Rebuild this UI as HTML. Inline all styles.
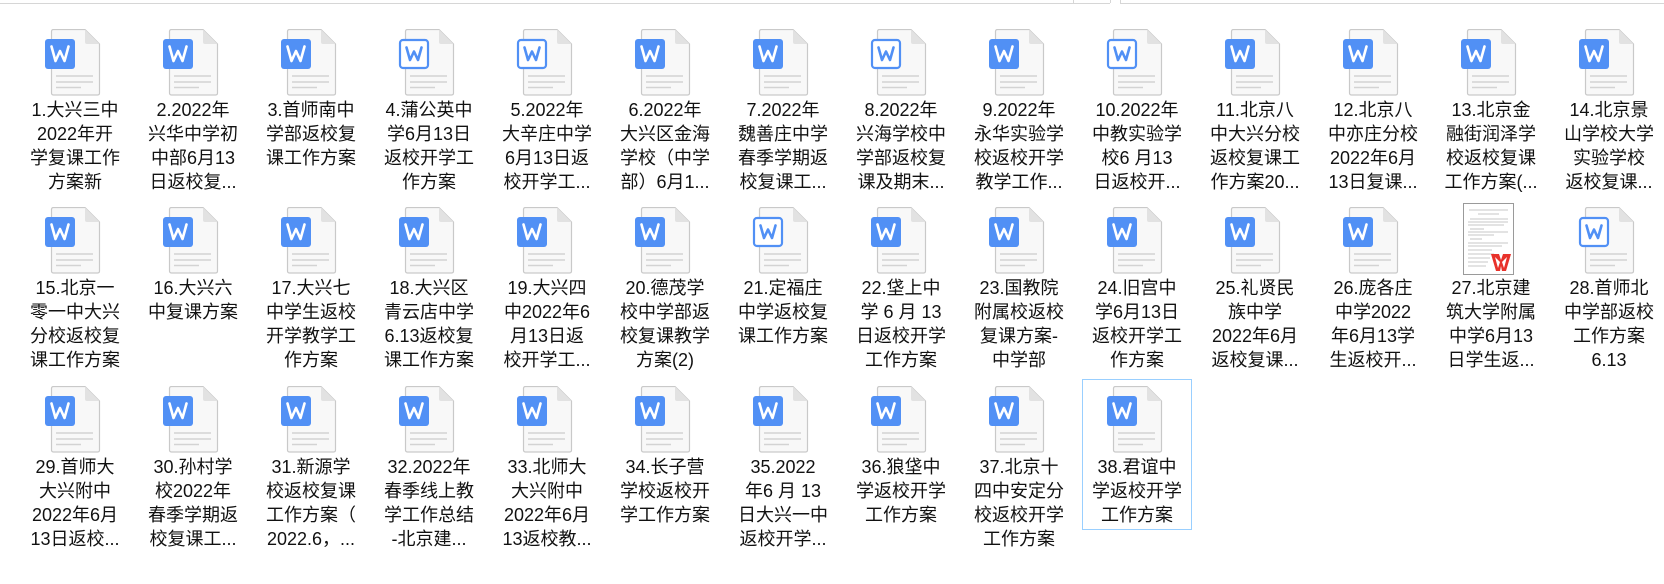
<!DOCTYPE html>
<html><head><meta charset="utf-8">
<style>
html,body{margin:0;padding:0;background:#fff;}
body{width:1664px;height:584px;position:relative;overflow:hidden;font-family:"Liberation Sans","Noto Sans CJK SC",sans-serif;}
.c{position:absolute;width:110px;height:178px;}
.c svg.i{position:absolute;left:23px;top:29px;width:60px;height:68px;}
.t{position:absolute;left:-4px;top:98px;width:118px;text-align:center;font-size:18px;line-height:24px;color:#111;white-space:nowrap;}
.sel{position:absolute;left:0;top:22px;width:108px;height:149px;border:1px solid #99cfff;}
.th{position:absolute;left:27px;top:25px;width:49px;height:70px;border:1px solid #9a9a9a;background:#fff;}
.tl{position:absolute;left:0;top:3px;height:0;border-top:1px solid #d6d6d6;}
</style></head><body>
<svg width="0" height="0" style="position:absolute">
<defs>
<symbol id="pg" viewBox="0 0 60 68">
<path d="M8.5 2.5 Q8.5 0.5 10.5 0.5 L42 0.5 L56.5 15 L56.5 64 Q56.5 66 54.5 66 L10.5 66 Q8.5 66 8.5 64 Z" fill="#f8f8f8" stroke="#c9c9c9" stroke-width="1.2"/>
<path d="M42 0.5 L42 13 Q42 15 44 15 L56.5 15 Z" fill="#e2e2e2"/>
<line x1="13" y1="47" x2="50" y2="47" stroke="#d3d3d3" stroke-width="1.6"/>
<line x1="13" y1="53" x2="50" y2="53" stroke="#d3d3d3" stroke-width="1.6"/>
<line x1="13" y1="58.5" x2="38" y2="58.5" stroke="#d3d3d3" stroke-width="1.6"/>
</symbol>
</defs></svg>
<div class="tl" style="left:0;width:1073px"></div>
<div style="position:absolute;left:1073px;top:0;height:3px;border-left:1px solid #d6d6d6"></div>
<div class="tl" style="left:1073px;width:37px"></div>
<div style="position:absolute;left:1110px;top:0;height:3px;border-left:1px solid #d6d6d6"></div>
<div style="position:absolute;left:1120px;top:0;height:3px;border-left:1px solid #d6d6d6"></div>
<div class="tl" style="left:1120px;width:544px"></div>

<!-- filled icon template: -->
<!-- row 1 -->
<div class="c" style="left:20px;top:0"><svg class="i" viewBox="0 0 60 68"><use href="#pg"/><rect x="2" y="10" width="30" height="30" rx="3" fill="#5190f5"/><polyline points="8.5,17.5 12.5,32 17,22 21.5,32 25.5,17.5" fill="none" stroke="#fff" stroke-width="2.6" stroke-linejoin="round" stroke-linecap="round"/></svg><div class="t">1.大兴三中<br>2022年开<br>学复课工作<br>方案新</div></div>
<div class="c" style="left:138px;top:0"><svg class="i" viewBox="0 0 60 68"><use href="#pg"/><rect x="2" y="10" width="30" height="30" rx="3" fill="#5190f5"/><polyline points="8.5,17.5 12.5,32 17,22 21.5,32 25.5,17.5" fill="none" stroke="#fff" stroke-width="2.6" stroke-linejoin="round" stroke-linecap="round"/></svg><div class="t">2.2022年<br>兴华中学初<br>中部6月13<br>日返校复...</div></div>
<div class="c" style="left:256px;top:0"><svg class="i" viewBox="0 0 60 68"><use href="#pg"/><rect x="2" y="10" width="30" height="30" rx="3" fill="#5190f5"/><polyline points="8.5,17.5 12.5,32 17,22 21.5,32 25.5,17.5" fill="none" stroke="#fff" stroke-width="2.6" stroke-linejoin="round" stroke-linecap="round"/></svg><div class="t">3.首师南中<br>学部返校复<br>课工作方案</div></div>
<div class="c" style="left:374px;top:0"><svg class="i" viewBox="0 0 60 68"><use href="#pg"/><rect x="3" y="11" width="28" height="28" rx="3" fill="#fff" stroke="#5190f5" stroke-width="2.2"/><polyline points="9.5,18.5 13,31 17,22.5 21,31 24.5,18.5" fill="none" stroke="#5190f5" stroke-width="2.6" stroke-linejoin="round" stroke-linecap="round"/></svg><div class="t">4.蒲公英中<br>学6月13日<br>返校开学工<br>作方案</div></div>
<div class="c" style="left:492px;top:0"><svg class="i" viewBox="0 0 60 68"><use href="#pg"/><rect x="3" y="11" width="28" height="28" rx="3" fill="#fff" stroke="#5190f5" stroke-width="2.2"/><polyline points="9.5,18.5 13,31 17,22.5 21,31 24.5,18.5" fill="none" stroke="#5190f5" stroke-width="2.6" stroke-linejoin="round" stroke-linecap="round"/></svg><div class="t">5.2022年<br>大辛庄中学<br>6月13日返<br>校开学工...</div></div>
<div class="c" style="left:610px;top:0"><svg class="i" viewBox="0 0 60 68"><use href="#pg"/><rect x="2" y="10" width="30" height="30" rx="3" fill="#5190f5"/><polyline points="8.5,17.5 12.5,32 17,22 21.5,32 25.5,17.5" fill="none" stroke="#fff" stroke-width="2.6" stroke-linejoin="round" stroke-linecap="round"/></svg><div class="t">6.2022年<br>大兴区金海<br>学校（中学<br>部）6月1...</div></div>
<div class="c" style="left:728px;top:0"><svg class="i" viewBox="0 0 60 68"><use href="#pg"/><rect x="2" y="10" width="30" height="30" rx="3" fill="#5190f5"/><polyline points="8.5,17.5 12.5,32 17,22 21.5,32 25.5,17.5" fill="none" stroke="#fff" stroke-width="2.6" stroke-linejoin="round" stroke-linecap="round"/></svg><div class="t">7.2022年<br>魏善庄中学<br>春季学期返<br>校复课工...</div></div>
<div class="c" style="left:846px;top:0"><svg class="i" viewBox="0 0 60 68"><use href="#pg"/><rect x="3" y="11" width="28" height="28" rx="3" fill="#fff" stroke="#5190f5" stroke-width="2.2"/><polyline points="9.5,18.5 13,31 17,22.5 21,31 24.5,18.5" fill="none" stroke="#5190f5" stroke-width="2.6" stroke-linejoin="round" stroke-linecap="round"/></svg><div class="t">8.2022年<br>兴海学校中<br>学部返校复<br>课及期末...</div></div>
<div class="c" style="left:964px;top:0"><svg class="i" viewBox="0 0 60 68"><use href="#pg"/><rect x="2" y="10" width="30" height="30" rx="3" fill="#5190f5"/><polyline points="8.5,17.5 12.5,32 17,22 21.5,32 25.5,17.5" fill="none" stroke="#fff" stroke-width="2.6" stroke-linejoin="round" stroke-linecap="round"/></svg><div class="t">9.2022年<br>永华实验学<br>校返校开学<br>教学工作...</div></div>
<div class="c" style="left:1082px;top:0"><svg class="i" viewBox="0 0 60 68"><use href="#pg"/><rect x="3" y="11" width="28" height="28" rx="3" fill="#fff" stroke="#5190f5" stroke-width="2.2"/><polyline points="9.5,18.5 13,31 17,22.5 21,31 24.5,18.5" fill="none" stroke="#5190f5" stroke-width="2.6" stroke-linejoin="round" stroke-linecap="round"/></svg><div class="t">10.2022年<br>中教实验学<br>校6 月13<br>日返校开...</div></div>
<div class="c" style="left:1200px;top:0"><svg class="i" viewBox="0 0 60 68"><use href="#pg"/><rect x="2" y="10" width="30" height="30" rx="3" fill="#5190f5"/><polyline points="8.5,17.5 12.5,32 17,22 21.5,32 25.5,17.5" fill="none" stroke="#fff" stroke-width="2.6" stroke-linejoin="round" stroke-linecap="round"/></svg><div class="t">11.北京八<br>中大兴分校<br>返校复课工<br>作方案20...</div></div>
<div class="c" style="left:1318px;top:0"><svg class="i" viewBox="0 0 60 68"><use href="#pg"/><rect x="2" y="10" width="30" height="30" rx="3" fill="#5190f5"/><polyline points="8.5,17.5 12.5,32 17,22 21.5,32 25.5,17.5" fill="none" stroke="#fff" stroke-width="2.6" stroke-linejoin="round" stroke-linecap="round"/></svg><div class="t">12.北京八<br>中亦庄分校<br>2022年6月<br>13日复课...</div></div>
<div class="c" style="left:1436px;top:0"><svg class="i" viewBox="0 0 60 68"><use href="#pg"/><rect x="2" y="10" width="30" height="30" rx="3" fill="#5190f5"/><polyline points="8.5,17.5 12.5,32 17,22 21.5,32 25.5,17.5" fill="none" stroke="#fff" stroke-width="2.6" stroke-linejoin="round" stroke-linecap="round"/></svg><div class="t">13.北京金<br>融街润泽学<br>校返校复课<br>工作方案(...</div></div>
<div class="c" style="left:1554px;top:0"><svg class="i" viewBox="0 0 60 68"><use href="#pg"/><rect x="2" y="10" width="30" height="30" rx="3" fill="#5190f5"/><polyline points="8.5,17.5 12.5,32 17,22 21.5,32 25.5,17.5" fill="none" stroke="#fff" stroke-width="2.6" stroke-linejoin="round" stroke-linecap="round"/></svg><div class="t">14.北京景<br>山学校大学<br>实验学校<br>返校复课...</div></div>
<!-- row 2 -->
<div class="c" style="left:20px;top:178px"><svg class="i" viewBox="0 0 60 68"><use href="#pg"/><rect x="2" y="10" width="30" height="30" rx="3" fill="#5190f5"/><polyline points="8.5,17.5 12.5,32 17,22 21.5,32 25.5,17.5" fill="none" stroke="#fff" stroke-width="2.6" stroke-linejoin="round" stroke-linecap="round"/></svg><div class="t">15.北京一<br>零一中大兴<br>分校返校复<br>课工作方案</div></div>
<div class="c" style="left:138px;top:178px"><svg class="i" viewBox="0 0 60 68"><use href="#pg"/><rect x="2" y="10" width="30" height="30" rx="3" fill="#5190f5"/><polyline points="8.5,17.5 12.5,32 17,22 21.5,32 25.5,17.5" fill="none" stroke="#fff" stroke-width="2.6" stroke-linejoin="round" stroke-linecap="round"/></svg><div class="t">16.大兴六<br>中复课方案</div></div>
<div class="c" style="left:256px;top:178px"><svg class="i" viewBox="0 0 60 68"><use href="#pg"/><rect x="2" y="10" width="30" height="30" rx="3" fill="#5190f5"/><polyline points="8.5,17.5 12.5,32 17,22 21.5,32 25.5,17.5" fill="none" stroke="#fff" stroke-width="2.6" stroke-linejoin="round" stroke-linecap="round"/></svg><div class="t">17.大兴七<br>中学生返校<br>开学教学工<br>作方案</div></div>
<div class="c" style="left:374px;top:178px"><svg class="i" viewBox="0 0 60 68"><use href="#pg"/><rect x="2" y="10" width="30" height="30" rx="3" fill="#5190f5"/><polyline points="8.5,17.5 12.5,32 17,22 21.5,32 25.5,17.5" fill="none" stroke="#fff" stroke-width="2.6" stroke-linejoin="round" stroke-linecap="round"/></svg><div class="t">18.大兴区<br>青云店中学<br>6.13返校复<br>课工作方案</div></div>
<div class="c" style="left:492px;top:178px"><svg class="i" viewBox="0 0 60 68"><use href="#pg"/><rect x="2" y="10" width="30" height="30" rx="3" fill="#5190f5"/><polyline points="8.5,17.5 12.5,32 17,22 21.5,32 25.5,17.5" fill="none" stroke="#fff" stroke-width="2.6" stroke-linejoin="round" stroke-linecap="round"/></svg><div class="t">19.大兴四<br>中2022年6<br>月13日返<br>校开学工...</div></div>
<div class="c" style="left:610px;top:178px"><svg class="i" viewBox="0 0 60 68"><use href="#pg"/><rect x="2" y="10" width="30" height="30" rx="3" fill="#5190f5"/><polyline points="8.5,17.5 12.5,32 17,22 21.5,32 25.5,17.5" fill="none" stroke="#fff" stroke-width="2.6" stroke-linejoin="round" stroke-linecap="round"/></svg><div class="t">20.德茂学<br>校中学部返<br>校复课教学<br>方案(2)</div></div>
<div class="c" style="left:728px;top:178px"><svg class="i" viewBox="0 0 60 68"><use href="#pg"/><rect x="3" y="11" width="28" height="28" rx="3" fill="#fff" stroke="#5190f5" stroke-width="2.2"/><polyline points="9.5,18.5 13,31 17,22.5 21,31 24.5,18.5" fill="none" stroke="#5190f5" stroke-width="2.6" stroke-linejoin="round" stroke-linecap="round"/></svg><div class="t">21.定福庄<br>中学返校复<br>课工作方案</div></div>
<div class="c" style="left:846px;top:178px"><svg class="i" viewBox="0 0 60 68"><use href="#pg"/><rect x="2" y="10" width="30" height="30" rx="3" fill="#5190f5"/><polyline points="8.5,17.5 12.5,32 17,22 21.5,32 25.5,17.5" fill="none" stroke="#fff" stroke-width="2.6" stroke-linejoin="round" stroke-linecap="round"/></svg><div class="t">22.垡上中<br>学 6 月 13<br>日返校开学<br>工作方案</div></div>
<div class="c" style="left:964px;top:178px"><svg class="i" viewBox="0 0 60 68"><use href="#pg"/><rect x="2" y="10" width="30" height="30" rx="3" fill="#5190f5"/><polyline points="8.5,17.5 12.5,32 17,22 21.5,32 25.5,17.5" fill="none" stroke="#fff" stroke-width="2.6" stroke-linejoin="round" stroke-linecap="round"/></svg><div class="t">23.国教院<br>附属校返校<br>复课方案-<br>中学部</div></div>
<div class="c" style="left:1082px;top:178px"><svg class="i" viewBox="0 0 60 68"><use href="#pg"/><rect x="2" y="10" width="30" height="30" rx="3" fill="#5190f5"/><polyline points="8.5,17.5 12.5,32 17,22 21.5,32 25.5,17.5" fill="none" stroke="#fff" stroke-width="2.6" stroke-linejoin="round" stroke-linecap="round"/></svg><div class="t">24.旧宫中<br>学6月13日<br>返校开学工<br>作方案</div></div>
<div class="c" style="left:1200px;top:178px"><svg class="i" viewBox="0 0 60 68"><use href="#pg"/><rect x="2" y="10" width="30" height="30" rx="3" fill="#5190f5"/><polyline points="8.5,17.5 12.5,32 17,22 21.5,32 25.5,17.5" fill="none" stroke="#fff" stroke-width="2.6" stroke-linejoin="round" stroke-linecap="round"/></svg><div class="t">25.礼贤民<br>族中学<br>2022年6月<br>返校复课...</div></div>
<div class="c" style="left:1318px;top:178px"><svg class="i" viewBox="0 0 60 68"><use href="#pg"/><rect x="2" y="10" width="30" height="30" rx="3" fill="#5190f5"/><polyline points="8.5,17.5 12.5,32 17,22 21.5,32 25.5,17.5" fill="none" stroke="#fff" stroke-width="2.6" stroke-linejoin="round" stroke-linecap="round"/></svg><div class="t">26.庞各庄<br>中学2022<br>年6月13学<br>生返校开...</div></div>
<div class="c" style="left:1436px;top:178px"><div class="th"><svg width="49" height="70" viewBox="0 0 49 70"><g stroke="#b5b5b5" stroke-width="0.8"><line x1="5" y1="6" x2="44" y2="6"/><line x1="14" y1="10" x2="35" y2="10"/><line x1="6" y1="15" x2="44" y2="15"/><line x1="4" y1="18" x2="44" y2="18"/><line x1="4" y1="21" x2="40" y2="21"/><line x1="6" y1="25" x2="20" y2="25"/><line x1="4" y1="28" x2="44" y2="28"/><line x1="4" y1="31" x2="30" y2="31"/><line x1="6" y1="35" x2="18" y2="35"/><line x1="4" y1="39" x2="44" y2="39"/><line x1="4" y1="42" x2="38" y2="42"/><line x1="4" y1="46" x2="28" y2="46"/><line x1="4" y1="50" x2="30" y2="50"/><line x1="4" y1="54" x2="26" y2="54"/><line x1="4" y1="58" x2="24" y2="58"/><line x1="4" y1="62" x2="22" y2="62"/></g><path d="M27 50 L35 50 L37 56 L39 50 L47 50 L42 67 L38 67 L37 62 L36 67 L32 67 Z" fill="#e8322b"/><path d="M31 53 L34 64 L36 58 Z" fill="#fff"/><path d="M43 53 L40 64 L38 58 Z" fill="#fff"/></svg></div><div class="t">27.北京建<br>筑大学附属<br>中学6月13<br>日学生返...</div></div>
<div class="c" style="left:1554px;top:178px"><svg class="i" viewBox="0 0 60 68"><use href="#pg"/><rect x="3" y="11" width="28" height="28" rx="3" fill="#fff" stroke="#5190f5" stroke-width="2.2"/><polyline points="9.5,18.5 13,31 17,22.5 21,31 24.5,18.5" fill="none" stroke="#5190f5" stroke-width="2.6" stroke-linejoin="round" stroke-linecap="round"/></svg><div class="t">28.首师北<br>中学部返校<br>工作方案<br>6.13</div></div>
<!-- row 3 -->
<div class="c" style="left:20px;top:357px"><svg class="i" viewBox="0 0 60 68"><use href="#pg"/><rect x="2" y="10" width="30" height="30" rx="3" fill="#5190f5"/><polyline points="8.5,17.5 12.5,32 17,22 21.5,32 25.5,17.5" fill="none" stroke="#fff" stroke-width="2.6" stroke-linejoin="round" stroke-linecap="round"/></svg><div class="t">29.首师大<br>大兴附中<br>2022年6月<br>13日返校...</div></div>
<div class="c" style="left:138px;top:357px"><svg class="i" viewBox="0 0 60 68"><use href="#pg"/><rect x="2" y="10" width="30" height="30" rx="3" fill="#5190f5"/><polyline points="8.5,17.5 12.5,32 17,22 21.5,32 25.5,17.5" fill="none" stroke="#fff" stroke-width="2.6" stroke-linejoin="round" stroke-linecap="round"/></svg><div class="t">30.孙村学<br>校2022年<br>春季学期返<br>校复课工...</div></div>
<div class="c" style="left:256px;top:357px"><svg class="i" viewBox="0 0 60 68"><use href="#pg"/><rect x="2" y="10" width="30" height="30" rx="3" fill="#5190f5"/><polyline points="8.5,17.5 12.5,32 17,22 21.5,32 25.5,17.5" fill="none" stroke="#fff" stroke-width="2.6" stroke-linejoin="round" stroke-linecap="round"/></svg><div class="t">31.新源学<br>校返校复课<br>工作方案（<br>2022.6，...</div></div>
<div class="c" style="left:374px;top:357px"><svg class="i" viewBox="0 0 60 68"><use href="#pg"/><rect x="2" y="10" width="30" height="30" rx="3" fill="#5190f5"/><polyline points="8.5,17.5 12.5,32 17,22 21.5,32 25.5,17.5" fill="none" stroke="#fff" stroke-width="2.6" stroke-linejoin="round" stroke-linecap="round"/></svg><div class="t">32.2022年<br>春季线上教<br>学工作总结<br>-北京建...</div></div>
<div class="c" style="left:492px;top:357px"><svg class="i" viewBox="0 0 60 68"><use href="#pg"/><rect x="2" y="10" width="30" height="30" rx="3" fill="#5190f5"/><polyline points="8.5,17.5 12.5,32 17,22 21.5,32 25.5,17.5" fill="none" stroke="#fff" stroke-width="2.6" stroke-linejoin="round" stroke-linecap="round"/></svg><div class="t">33.北师大<br>大兴附中<br>2022年6月<br>13返校教...</div></div>
<div class="c" style="left:610px;top:357px"><svg class="i" viewBox="0 0 60 68"><use href="#pg"/><rect x="2" y="10" width="30" height="30" rx="3" fill="#5190f5"/><polyline points="8.5,17.5 12.5,32 17,22 21.5,32 25.5,17.5" fill="none" stroke="#fff" stroke-width="2.6" stroke-linejoin="round" stroke-linecap="round"/></svg><div class="t">34.长子营<br>学校返校开<br>学工作方案</div></div>
<div class="c" style="left:728px;top:357px"><svg class="i" viewBox="0 0 60 68"><use href="#pg"/><rect x="2" y="10" width="30" height="30" rx="3" fill="#5190f5"/><polyline points="8.5,17.5 12.5,32 17,22 21.5,32 25.5,17.5" fill="none" stroke="#fff" stroke-width="2.6" stroke-linejoin="round" stroke-linecap="round"/></svg><div class="t">35.2022<br>年6 月 13<br>日大兴一中<br>返校开学...</div></div>
<div class="c" style="left:846px;top:357px"><svg class="i" viewBox="0 0 60 68"><use href="#pg"/><rect x="2" y="10" width="30" height="30" rx="3" fill="#5190f5"/><polyline points="8.5,17.5 12.5,32 17,22 21.5,32 25.5,17.5" fill="none" stroke="#fff" stroke-width="2.6" stroke-linejoin="round" stroke-linecap="round"/></svg><div class="t">36.狼垡中<br>学返校开学<br>工作方案</div></div>
<div class="c" style="left:964px;top:357px"><svg class="i" viewBox="0 0 60 68"><use href="#pg"/><rect x="2" y="10" width="30" height="30" rx="3" fill="#5190f5"/><polyline points="8.5,17.5 12.5,32 17,22 21.5,32 25.5,17.5" fill="none" stroke="#fff" stroke-width="2.6" stroke-linejoin="round" stroke-linecap="round"/></svg><div class="t">37.北京十<br>四中安定分<br>校返校开学<br>工作方案</div></div>
<div class="c" style="left:1082px;top:357px"><div class="sel"></div><svg class="i" viewBox="0 0 60 68"><use href="#pg"/><rect x="2" y="10" width="30" height="30" rx="3" fill="#5190f5"/><polyline points="8.5,17.5 12.5,32 17,22 21.5,32 25.5,17.5" fill="none" stroke="#fff" stroke-width="2.6" stroke-linejoin="round" stroke-linecap="round"/></svg><div class="t">38.君谊中<br>学返校开学<br>工作方案</div></div>
</body></html>
